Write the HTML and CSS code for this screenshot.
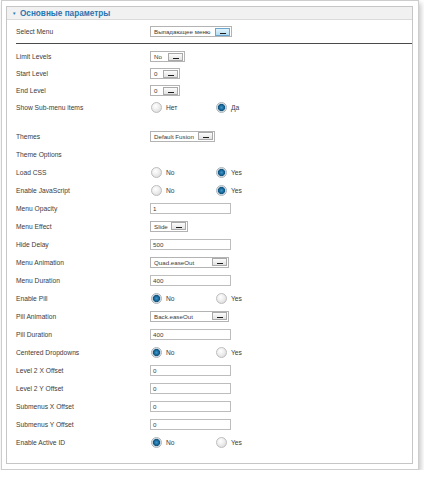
FILE: index.html
```html
<!DOCTYPE html>
<html lang="ru">
<head>
<meta charset="utf-8">
<title>Основные параметры</title>
<link rel="stylesheet" href="styles.css">
</head>
<body>
<div class="frame">
  <div class="panel">
    <div class="panel-head"><span class="tri">▼</span><span class="head-text">Основные параметры</span></div>
    <div class="panel-body">
      <div class="row row-top">
        <div class="label">Select Menu</div>
        <div class="sel w-menu"><span>Выпадающее меню</span><span class="btn btn-hover"><i></i></span></div>
      </div>
      <div class="sep"></div>

      <div class="group-a">
        <div class="row row-s">
          <div class="label">Limit Levels</div>
          <div class="sel w-no"><span>No</span><span class="btn"><i></i></span></div>
        </div>
        <div class="row row-s">
          <div class="label">Start Level</div>
          <div class="sel w-zero"><span>0</span><span class="btn"><i></i></span></div>
        </div>
        <div class="row row-s">
          <div class="label">End Level</div>
          <div class="sel w-zero"><span>0</span><span class="btn"><i></i></span></div>
        </div>
        <div class="row row-s">
          <div class="label">Show Sub-menu items</div>
          <div class="radios"><label class="opt"><span class="radio"></span>Нет</label><label class="opt"><span class="radio on"></span>Да</label></div>
        </div>
      </div>

      <div class="group-b">
        <div class="row">
          <div class="label">Themes</div>
          <div class="sel w-theme"><span>Default Fusion</span><span class="btn"><i></i></span></div>
        </div>
        <div class="row">
          <div class="label">Theme Options</div>
        </div>
        <div class="row">
          <div class="label">Load CSS</div>
          <div class="radios"><label class="opt"><span class="radio"></span>No</label><label class="opt"><span class="radio on"></span>Yes</label></div>
        </div>
        <div class="row">
          <div class="label">Enable JavaScript</div>
          <div class="radios"><label class="opt"><span class="radio"></span>No</label><label class="opt"><span class="radio on"></span>Yes</label></div>
        </div>
        <div class="row">
          <div class="label">Menu Opacity</div>
          <div class="input">1</div>
        </div>
        <div class="row">
          <div class="label">Menu Effect</div>
          <div class="sel w-slide"><span>Slide</span><span class="btn"><i></i></span></div>
        </div>
        <div class="row">
          <div class="label">Hide Delay</div>
          <div class="input">500</div>
        </div>
        <div class="row">
          <div class="label">Menu Animation</div>
          <div class="sel w-anim"><span>Quad.easeOut</span><span class="btn"><i></i></span></div>
        </div>
        <div class="row">
          <div class="label">Menu Duration</div>
          <div class="input">400</div>
        </div>
        <div class="row">
          <div class="label">Enable Pill</div>
          <div class="radios"><label class="opt"><span class="radio on"></span>No</label><label class="opt"><span class="radio"></span>Yes</label></div>
        </div>
        <div class="row">
          <div class="label">Pill Animation</div>
          <div class="sel w-anim"><span>Back.easeOut</span><span class="btn"><i></i></span></div>
        </div>
        <div class="row">
          <div class="label">Pill Duration</div>
          <div class="input">400</div>
        </div>
        <div class="row">
          <div class="label">Centered Dropdowns</div>
          <div class="radios"><label class="opt"><span class="radio on"></span>No</label><label class="opt"><span class="radio"></span>Yes</label></div>
        </div>
        <div class="row">
          <div class="label">Level 2 X Offset</div>
          <div class="input">0</div>
        </div>
        <div class="row">
          <div class="label">Level 2 Y Offset</div>
          <div class="input">0</div>
        </div>
        <div class="row">
          <div class="label">Submenus X Offset</div>
          <div class="input">0</div>
        </div>
        <div class="row">
          <div class="label">Submenus Y Offset</div>
          <div class="input">0</div>
        </div>
        <div class="row">
          <div class="label">Enable Active ID</div>
          <div class="radios"><label class="opt"><span class="radio on"></span>No</label><label class="opt"><span class="radio"></span>Yes</label></div>
        </div>
      </div>
    </div>
  </div>
</div>
</body>
</html>
```

FILE: styles.css
```css
html, body {
  margin: 0;
  padding: 0;
  background: #ffffff;
}

body {
  font-family: "Liberation Sans", Arial, sans-serif;
  color: #3a3a3a;
}

.frame {
  box-sizing: border-box;
  width: 418px;
  height: 470px;
  margin-left: 1px;
  border: 1px solid #cdcdcd;
  padding: 5px 5px 5px 4px;
  background: #ffffff;
  box-shadow: 2px 3px 5px rgba(0, 0, 0, 0.22);
}

.panel {
  box-sizing: border-box;
  height: 100%;
  border: 1px solid #c6c6c6;
  background: #ffffff;
}

.panel-head {
  height: 12px;
  background: #f1f1f1;
  border-bottom: 1px solid #dadada;
  display: flex;
  align-items: center;
  padding-left: 5px;
  color: #2676b3;
  font-weight: bold;
  font-size: 8.2px;
}

.head-text {
  white-space: nowrap;
}

.tri {
  font-size: 4.5px;
  width: 4px;
  margin-right: 4px;
  color: #2b7ab5;
}

.panel-body {
  padding-top: 3px;
}

.row {
  display: flex;
  align-items: center;
  height: 18px;
}

.row-top,
.row-s {
  height: 17px;
}

.label {
  box-sizing: border-box;
  flex: none;
  width: 143px;
  padding-left: 9px;
  font-size: 6.7px;
  color: #3c3c3c;
}

.sep {
  height: 1px;
  margin: 3px 0 0 9px;
  background: #4a4a4a;
}

.group-a {
  margin-top: 4px;
}

.group-b {
  margin-top: 11px;
}

.sel {
  box-sizing: border-box;
  height: 11px;
  border: 1px solid #b3b3b3;
  display: flex;
  align-items: center;
  justify-content: space-between;
  padding: 0 1px 0 3px;
  font-size: 6.2px;
  color: #3a3a3a;
  background: #fff;
}

.btn {
  box-sizing: border-box;
  width: 15px;
  height: 8px;
  border: 1px solid #a9a9a9;
  background: linear-gradient(#fcfcfc, #e2e2e2);
  display: flex;
  align-items: flex-end;
  justify-content: center;
  padding-bottom: 1px;
}

.btn i {
  display: block;
  width: 6px;
  height: 1px;
  background: #1d1d1d;
}

.btn-hover {
  border-color: #6aa6cd;
  background: linear-gradient(#e1f3fc, #b3dcf1);
}

.w-menu { width: 82px; }
.w-no { width: 35px; }
.w-zero { width: 30px; }
.w-theme { width: 65px; }
.w-slide { width: 38px; }
.w-anim { width: 79px; }

.input {
  box-sizing: border-box;
  width: 81px;
  height: 11px;
  border: 1px solid #bdbdbd;
  padding-left: 2px;
  font-size: 6.2px;
  line-height: 9px;
  color: #3a3a3a;
}

.radios {
  display: flex;
  margin-left: 1px;
}

.opt {
  display: flex;
  align-items: center;
  gap: 4px;
  width: 65px;
  font-size: 6.7px;
  color: #3c3c3c;
}

.radio {
  box-sizing: border-box;
  width: 11px;
  height: 11px;
  border-radius: 50%;
  border: 1px solid #bdbdbd;
  background: radial-gradient(circle at 40% 35%, #ffffff 0, #f0f0f0 40%, #d4d4d4 100%);
}

.radio.on {
  border-color: #a9b3bb;
  background: radial-gradient(circle at 50% 50%, #3d97cc 0, #1a6a9c 2.2px, #0f557f 3.2px, #bfcbd4 3.9px, #eef0f2 4.6px, #cfd3d6 100%);
}
```
